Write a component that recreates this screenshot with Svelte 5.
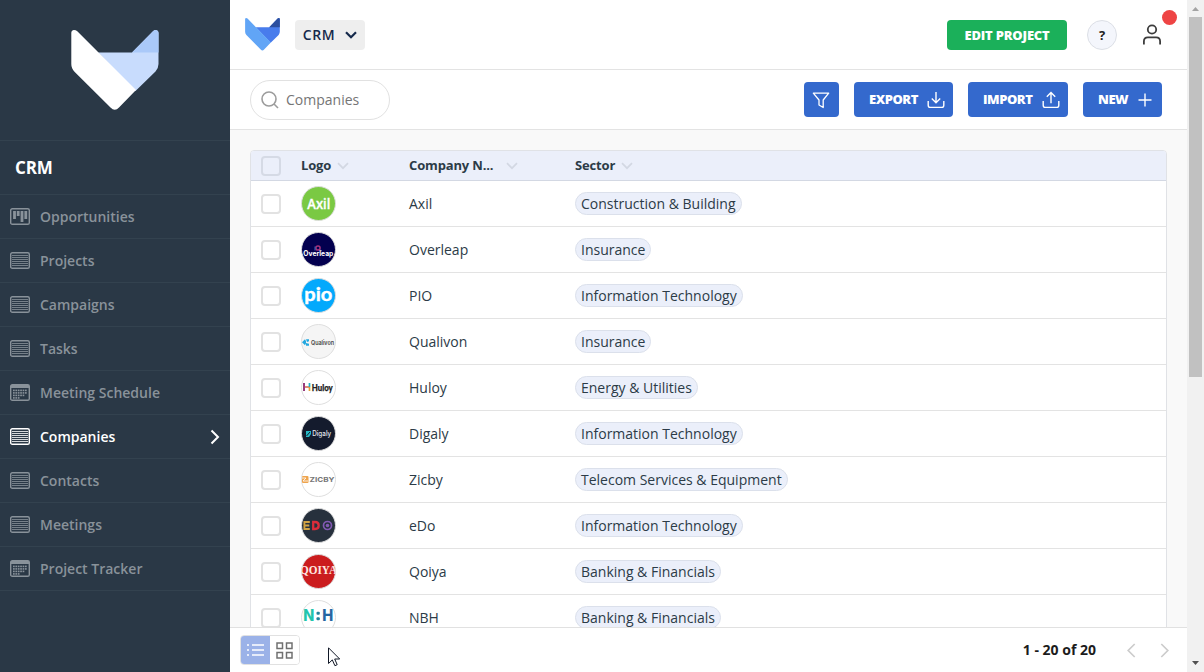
<script>
  const nav = [
    { label: 'Opportunities', icon: 'board' },
    { label: 'Projects', icon: 'list' },
    { label: 'Campaigns', icon: 'list' },
    { label: 'Tasks', icon: 'list' },
    { label: 'Meeting Schedule', icon: 'calendar' },
    { label: 'Companies', icon: 'list', active: true },
    { label: 'Contacts', icon: 'list' },
    { label: 'Meetings', icon: 'list' },
    { label: 'Project Tracker', icon: 'calendar' }
  ];
  const rows = [
    { name: 'Axil', sector: 'Construction & Building' },
    { name: 'Overleap', sector: 'Insurance' },
    { name: 'PIO', sector: 'Information Technology' },
    { name: 'Qualivon', sector: 'Insurance' },
    { name: 'Huloy', sector: 'Energy & Utilities' },
    { name: 'Digaly', sector: 'Information Technology' },
    { name: 'Zicby', sector: 'Telecom Services & Equipment' },
    { name: 'eDo', sector: 'Information Technology' },
    { name: 'Qoiya', sector: 'Banking & Financials' },
    { name: 'NBH', sector: 'Banking & Financials' }
  ];
  const disc = {
    Axil: '#7ac943', Overleap: '#03004f', PIO: '#03a9fc', Qualivon: '#f5f5f5', Huloy: '#fff',
    Digaly: '#141b2d', Zicby: '#fff', eDo: '#27313d', Qoiya: '#cb1c1e', NBH: '#fff'
  };
  const dots = [];
  for (let r = 0; r < 4; r++) {
    for (let c = 0; c < 6; c++) {
      if (r === 3 && c > 2) continue;
      if (r === 2 && c > 4) continue;
      dots.push([3 + c * 2.4, 5.6 + r * 2.5]);
    }
  }
</script>

{#snippet fox(w, h, a, b, c)}
  <svg width={w} height={h} viewBox="0 0 88 81" preserveAspectRatio="none">
    <path d="M27 22.5H61L82 1.2Q84.3-.8 86.6.8 87.5 1.5 87.5 3V34Q87.5 38 84.5 41.5L64.5 61Z" fill={b} />
    <path d="M61 22.5L82 1.2Q84.3-.8 86.6.8 87.5 1.5 87.5 3V22.5Z" fill={c} />
    <path d="M.3 3Q.3 .3 3 0 4.8 0 6.3 1.3L65 60 48 77.5Q43.8 82 39.5 77.5L3.5 41.8Q.3 38.5 .3 34Z" fill={a} />
  </svg>
{/snippet}

{#snippet chevron()}
  <svg width="12" height="8" viewBox="0 0 12 8" fill="none" stroke="#d3d8e3" stroke-width="1.7"><path d="M1 1.2l5 5 5-5" /></svg>
{/snippet}

<div class="page">
  <aside>
    <div class="brand">{@render fox(88, 81, '#fff', '#c8dcfd', '#aac9f9')}</div>
    <h2>CRM</h2>
    <nav>
      {#each nav as item}
        <div class="item" class:active={item.active}>
          <svg width="20" height="17" viewBox="0 0 20 17" fill="none" stroke="currentColor">
            <rect x=".7" y=".7" width="18.6" height="15.6" rx="1.6" stroke-width="1.4" />
            {#if item.icon === 'list'}
              <path d="M2 3.5h16M2 5.5h16M2 7.5h16M2 9.5h16M2 11.5h16M2 13.5h16" stroke-width="1" opacity=".8" />
            {:else if item.icon === 'board'}
              <path d="M4.5 3v8M8.2 3v5M12 3v11M15.8 3v8" stroke-width="2.8" />
            {:else}
              <path d="M1 2.5h18" stroke-width="3" />
              {#each dots as d}<rect x={d[0]} y={d[1]} width="1.7" height="1.6" fill="currentColor" stroke="none" />{/each}
            {/if}
          </svg>
          <span>{item.label}</span>
          {#if item.active}
            <svg class="arrow" width="10" height="16" viewBox="0 0 10 16" fill="none" stroke="#fff" stroke-width="2"><path d="M1.500 1.500L8 8l-6.500 6.500" /></svg>
          {/if}
        </div>
      {/each}
    </nav>
  </aside>

  <main>
    <header>
      {@render fox(35, 33, '#61a5f6', '#487cec', '#2c4f9f')}
      <button class="project">CRM
        <svg width="12" height="8" viewBox="0 0 12 8" fill="none" stroke="#15294b" stroke-width="2.2"><path d="M1 1.200l5 5 5-5" /></svg>
      </button>
      <button class="edit">EDIT PROJECT</button>
      <button class="help">?</button>
      <div class="user">
        <svg width="20" height="22" viewBox="0 0 20 22" fill="none" stroke="#3d3d3d" stroke-width="1.8">
          <circle cx="10" cy="5.500" r="4.200" /><path d="M1.900 20.500v-3.200Q1.900 13.300 5.900 13.300h8.200q4 0 4 4v3.200" />
        </svg>
        <i class="badge"></i>
      </div>
    </header>

    <section class="tools">
      <div class="search">
        <svg width="18" height="18" viewBox="0 0 18 18" fill="none" stroke="#9c9c9c" stroke-width="1.600"><circle cx="8" cy="8" r="7" /><path d="M13 13l4 4" /></svg>
        <span>Companies</span>
      </div>
      <button class="blue filter">
        <svg width="18" height="17" viewBox="0 0 18 17" fill="none" stroke="#fff" stroke-width="1.300" stroke-linejoin="round"><path d="M1.300 1.200h15.400L11.200 8v7.500L7 13V8z" /></svg>
      </button>
      <button class="blue export">EXPORT
        <svg width="18" height="18" viewBox="0 0 18 18" fill="none" stroke="#fff" stroke-width="1.400"><path d="M9 1v10.500M4.800 7.500L9 11.700l4.200-4.200M1.200 10v4.200q0 2.200 2.200 2.200h11.200q2.200 0 2.200-2.200V10" /></svg>
      </button>
      <button class="blue import">IMPORT
        <svg width="18" height="18" viewBox="0 0 18 18" fill="none" stroke="#fff" stroke-width="1.400"><path d="M9 12.200V1.700M4.800 5.700L9 1.500l4.200 4.200M1.200 10v4.200q0 2.200 2.200 2.200h11.200q2.200 0 2.200-2.200V10" /></svg>
      </button>
      <button class="blue new">NEW
        <svg width="14" height="14" viewBox="0 0 14 14" stroke="#fff" stroke-width="1.400"><path d="M7 .5v13M.5 7h13" /></svg>
      </button>
    </section>

    <section class="content">
      <div class="table">
        <div class="row head">
          <div><i class="check"></i></div>
          <div>Logo {@render chevron()}</div>
          <div class="wide"><span>Company N...</span> {@render chevron()}</div>
          <div>Sector {@render chevron()}</div>
        </div>
        {#each rows as r}
          <div class="row">
            <div><i class="check"></i></div>
            <div>
              <svg class="logo" width="35" height="35" viewBox="0 0 35 35">
                <defs><clipPath id={'c' + r.name}><circle cx="17.500" cy="17.500" r="17" /></clipPath></defs>
                <circle cx="17.500" cy="17.500" r="17" fill={disc[r.name]} stroke="#dedede" />
                <g clip-path={`url(#c${r.name})`} text-anchor="middle">
                  {#if r.name === 'Axil'}
                    <text x="17.800" y="22.700" font-size="13.500" font-weight="600" fill="#fff" stroke="#fff" stroke-width=".3" textLength="23" lengthAdjust="spacingAndGlyphs">Axil</text>
                  {:else if r.name === 'Overleap'}
                    <circle cx="17" cy="16" r="2.100" fill="none" stroke="#a8327c" stroke-width="1.500" /><path d="M14 14.500v4M19.500 18l1.500 1" stroke="#366bc0" />
                    <text x="17.300" y="23.500" class="wide-face" font-size="7" font-weight="700" fill="#fff" textLength="30" lengthAdjust="spacingAndGlyphs">Overleap</text>
                  {:else if r.name === 'PIO'}
                    <text x="17.300" y="23" class="round" font-size="18.500" font-weight="700" fill="#fff" stroke="#fff" stroke-width=".4" textLength="28" lengthAdjust="spacingAndGlyphs">pio</text>
                  {:else if r.name === 'Qualivon'}
                    <path d="M4 15.300l-3 3 3 3 1-2v-2zM5 15.200h3v2L6 18zM5 19l3 .700v2H5z" fill="#24a8e0" />
                    <text x="21.500" y="21" class="wide-face" font-size="5.800" font-weight="600" fill="#444" textLength="23" lengthAdjust="spacingAndGlyphs">Qualivon</text>
                  {:else if r.name === 'Huloy'}
                    <path d="M3 13v8" stroke="#8b286f" stroke-width="1.800" /><path d="M4 17h5" stroke="#d4694d" stroke-width="1.700" /><path d="M8.500 13v4" stroke="#21b1c5" stroke-width="1.700" /><path d="M8.500 17v4" stroke="#e69e3a" stroke-width="1.700" />
                    <text x="21.300" y="20.500" class="round" font-size="9.500" font-weight="900" fill="#222" stroke="#222" stroke-width=".25" textLength="21" lengthAdjust="spacingAndGlyphs">Huloy</text>
                  {:else if r.name === 'Digaly'}
                    <path d="M5 15h5v3l-2 3H5z" fill="#25bac7" /><path d="M5.500 20l3.500-4" stroke="#141b2d" />
                    <text x="20.700" y="20" class="wide-face" font-size="7" font-weight="500" fill="#e2e8ef" textLength="19" lengthAdjust="spacingAndGlyphs">Digaly</text>
                  {:else if r.name === 'Zicby'}
                    <rect x="1" y="14" width="6.500" height="7" rx="1" fill="#eea44e" /><path d="M1 16h4l-3 3h5" stroke="#fff" stroke-width=".8" fill="none" />
                    <text x="21" y="19.900" class="wide-face" font-size="6.800" font-weight="700" fill="#777" textLength="25" lengthAdjust="spacingAndGlyphs">ZICBY</text>
                  {:else if r.name === 'eDo'}
                    <path d="M8.800 14H3.400v7h5.400M3 17.500h5.300" stroke="#d1a344" stroke-width="1.900" fill="none" />
                    <path d="M12.200 14v7h1.800q3.700 0 3.700-3.500t-3.700-3.500z" stroke="#dc2c3a" stroke-width="2.300" fill="none" />
                    <circle cx="26.500" cy="17.500" r="4" stroke="#8259b4" stroke-width="1.700" fill="none" /><circle cx="26.500" cy="17.500" r="1.800" fill="#8259b4" />
                  {:else if r.name === 'Qoiya'}
                    <text x="17.500" y="20" class="serif" font-size="12" font-weight="700" fill="#ffe7e0" textLength="37" lengthAdjust="spacingAndGlyphs">QOIYA</text>
                  {:else}
                    <text x="7.700" y="21" class="wide-face" font-size="16" font-weight="800" fill="#22c5ac" textLength="11" lengthAdjust="spacingAndGlyphs">N</text>
                    <rect x="15.500" y="11.800" width="3.300" height="3" rx="1" fill="#22829c" /><rect x="15.500" y="17.200" width="3.300" height="3" rx="1" fill="#22829c" />
                    <text x="26.700" y="21" class="wide-face" font-size="16" font-weight="800" fill="#2666a2" textLength="11" lengthAdjust="spacingAndGlyphs">H</text>
                  {/if}
                </g>
              </svg>
            </div>
            <div>{r.name}</div>
            <div><span class="tag">{r.sector}</span></div>
          </div>
        {/each}
      </div>
    </section>

    <footer>
      <div class="views">
        <button class="on">
          <svg width="18" height="14" viewBox="0 0 18 14" stroke="#fff" stroke-width="1.500"><path d="M0 2h2M5 2h12M0 7h2M5 7h12M0 12h2M5 12h12" /></svg>
        </button>
        <button>
          <svg width="17" height="17" viewBox="0 0 17 17" fill="none" stroke="#707070" stroke-width="1.500"><path d="M1 1h5.500v5.500H1zM10.500 1H16v5.500h-5.500zM1 10.500h5.500V16H1zM10.500 10.500H16V16h-5.500z" /></svg>
        </button>
      </div>
      <strong>1 - 20 of 20</strong>
      <svg width="9" height="15" viewBox="0 0 9 15" fill="none" stroke="#ccc" stroke-width="1.700"><path d="M7.700 1L1.200 7.500 7.700 14" /></svg>
      <svg width="9" height="15" viewBox="0 0 9 15" fill="none" stroke="#ccc" stroke-width="1.700"><path d="M1.300 1l6.500 6.500L1.300 14" /></svg>
    </footer>
  </main>

  <div class="scroll">
    <svg width="7" height="4" viewBox="0 0 7 4"><path d="M0 4L3.500 0 7 4z" fill="#a3a3a3" /></svg>
    <i></i>
    <svg class="down" width="7" height="4" viewBox="0 0 7 4"><path d="M0 0h7L3.500 4z" fill="#505050" /></svg>
  </div>

  <svg class="cursor" width="13" height="20" viewBox="0 0 13 20"><path d="M.5 .8V16.500L4.300 12.900 6.900 18.700 9.200 17.700 6.700 12H11.700z" fill="#fff" stroke="#111827" /></svg>
</div>

<style>
  :global(body) { margin: 0; overflow: hidden; }
  * { box-sizing: border-box; }
  .page { position: relative; display: flex; width: 1204px; height: 672px; overflow: hidden; background: #fff; color: #2c3b47; font: 14px "Open Sans", sans-serif; }
  svg { display: block; flex: none; }
  button { display: flex; align-items: center; justify-content: center; margin: 0; padding: 0; border: 0; font: 700 13px "Open Sans", sans-serif; }
  aside { width: 230px; flex: none; background: #2a3846; }
  .brand { height: 141px; padding: 30px 0 0 71px; border-bottom: 1px solid #33424f; }
  h2 { margin: 0; height: 54px; padding-left: 15px; border-bottom: 1px solid #33424f; font-size: 17px; font-weight: 700; line-height: 54px; letter-spacing: -.2px; color: #fff; }
  .item { display: flex; align-items: center; gap: 10px; height: 44px; padding: 0 10px; border-bottom: 1px solid #33424f; font-weight: 600; color: #89929a; }
  .item.active { color: #fff; }
  .arrow { margin-left: auto; }
  main { width: 957px; display: flex; flex-direction: column; }
  header { display: flex; align-items: center; height: 70px; padding: 0 25px 0 15px; border-bottom: 1px solid #e3e3e3; }
  .project { width: 70px; height: 30px; margin-left: 15px; gap: 10px; border-radius: 4px; background: #eee; color: #15294b; font-size: 14px; font-weight: 600; letter-spacing: .6px; }
  .edit { width: 120px; height: 30px; margin-left: auto; border-radius: 4px; background: #1bb05a; color: #fff; font-weight: 800; letter-spacing: -.2px; }
  .help { width: 30px; height: 30px; margin-left: 20px; border: 1px solid #dcdfe6; border-radius: 50%; background: #f4f6fc; color: #222; }
  .user { position: relative; margin-left: 25px; }
  .badge { position: absolute; left: 20px; top: -14px; width: 15px; height: 15px; border-radius: 50%; background: #ee4444; }
  .tools { display: flex; align-items: center; gap: 15px; height: 60px; padding: 0 25px 0 20px; border-bottom: 1px solid #e3e3e3; }
  .search { display: flex; align-items: center; gap: 7px; width: 140px; height: 40px; margin-right: auto; padding-left: 10px; border: 1px solid #e1e1e1; border-radius: 20px; color: #757575; }
  .blue { height: 35px; padding-bottom: 1px; border-radius: 4px; background: #3469cd; color: #fff; font-weight: 800; letter-spacing: -.45px; justify-content: space-between; }
  .filter { width: 35px; padding: 1px 9px 0 8px; }
  .export { width: 99px; padding: 0 8.500px 1px 15px; }
  .import { width: 100px; padding: 0 8.500px 1px 15px; }
  .new { width: 79px; padding: 0 10.500px 1px 15px; }
  .blue:not(.filter) svg { margin-top: 1px; }
  .content { flex: 1; min-height: 0; padding: 20px 20px 0; overflow: hidden; background: #f9f9f9; }
  .table { border: 1px solid #e0e2e6; border-radius: 4px 4px 0 0; overflow: hidden; background: #fff; }
  .row { display: grid; grid-template-columns: 50px 108px 166px 1fr; height: 46px; border-bottom: 1px solid #e3e3e3; }
  .row > div { display: flex; align-items: center; }
  .row > div:first-child { padding-left: 10px; }
  .head { height: 30px; background: #ebeffa; border-bottom-color: #d3d8e3; font-size: 13px; font-weight: 700; letter-spacing: -.15px; }
  .head > div { gap: 6px; padding-bottom: 1px; }
  .head > div:first-child { padding-bottom: 0; }
  .head .wide { gap: 13px; }
  .head svg { margin-top: 1px; }
  .check { width: 20px; height: 20px; border: 2px solid #e2e2e2; border-radius: 4px; background: #fff; }
  .head .check { background: none; border-color: #d5dae5; }
  .logo { font-family: "Open Sans", sans-serif; }
  .serif { font-family: "Liberation Serif", serif; }
  .wide-face { font-family: Inter, sans-serif; }
  .round { font-family: Lato, sans-serif; }
  .tag { height: 23px; padding: 0 5px; border: 1px solid #dbe0eb; border-radius: 12px; background: #ebeffa; line-height: 21px; }
  footer { display: flex; align-items: center; height: 45px; padding: 0 18px 0 10px; border-top: 1px solid #e1e1e1; color: #1c1c1c; }
  .views { display: flex; width: 60px; height: 30px; margin: 0 auto 0 0; border: 1px solid #e1e1e1; border-radius: 4px; overflow: hidden; }
  .views button { flex: 1; background: #fff; }
  .views .on { flex: 0 0 29px; background: #9bb2e8; }
  footer strong { margin-right: 31px; padding-bottom: 2px; }
  footer svg + svg { margin-left: 24px; }
  .scroll { display: flex; flex-direction: column; align-items: center; width: 17px; padding: 7px 0; background: #f1f1f1; }
  .scroll i { width: 13px; height: 360px; margin-top: 6px; background: #c1c1c1; }
  .down { margin-top: auto; }
  .cursor { position: absolute; left: 328px; top: 647px; }
</style>
